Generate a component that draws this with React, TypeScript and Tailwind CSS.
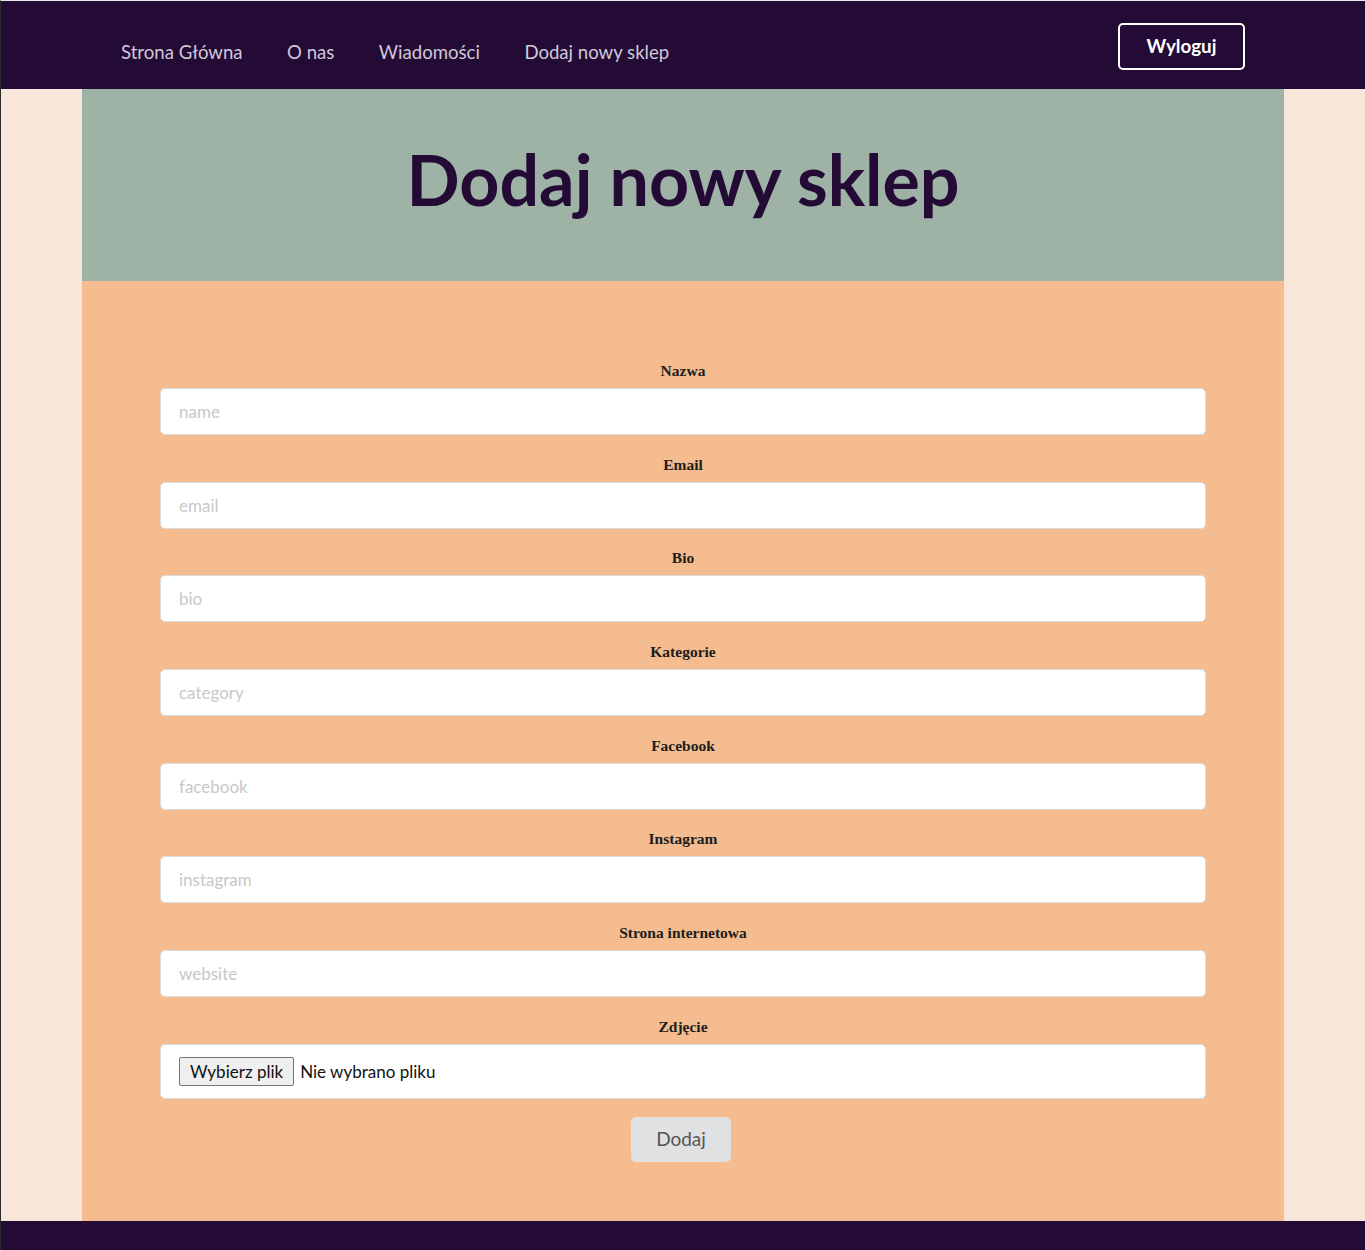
import React from "react";

const fields = [
  { label: "Nazwa", ph: "name" },
  { label: "Email", ph: "email" },
  { label: "Bio", ph: "bio" },
  { label: "Kategorie", ph: "category" },
  { label: "Facebook", ph: "facebook" },
  { label: "Instagram", ph: "instagram" },
  { label: "Strona internetowa", ph: "website" },
];

const lato = { fontFamily: "Lato, 'Liberation Sans', sans-serif" } as React.CSSProperties;
const serif = { fontFamily: "'Liberation Serif', 'DejaVu Serif', serif" } as React.CSSProperties;

export default function App() {
  return (
    <div
      className="min-h-[1250px] bg-[#f8e6db] border-t border-t-[#e6e6e6] border-l border-l-[#2a2a2a] flex flex-col"
      style={lato}
    >
      <nav className="bg-[#240b36] h-[88px] shrink-0">
        <div className="w-[1202px] mx-auto h-full flex items-center justify-between pl-[39px] pr-[39px]">
          <div className="flex items-center gap-[44.5px] mt-[15px] text-[18.6px] text-[#cfc8d8]">
            <a>Strona Główna</a>
            <a>O nas</a>
            <a>Wiadomości</a>
            <a>Dodaj nowy sklep</a>
          </div>
          <button className="mt-[3px] w-[127px] h-[47px] border-2 border-white rounded-[5px] text-white font-bold text-[18.8px]">
            Wyloguj
          </button>
        </div>
      </nav>
      <main className="w-[1202px] mx-auto flex flex-col">
        <header className="bg-[#9eb2a6] h-[192px] flex items-center justify-center">
          <h1 className="text-[70px] font-bold text-[#240b36] leading-none -mt-[12px]">Dodaj nowy sklep</h1>
        </header>
        <form className="bg-[#f4bc8f] px-[78px] pt-[80px] pb-[59px] flex flex-col">
          {fields.map((f, i) => (
            <div key={f.label} className={i === 0 ? "" : "mt-[19.7px]"}>
              <label
                className="block text-center text-[15.5px] leading-[20px] font-bold text-[#1d1d1d] mb-[7px]"
                style={serif}
              >
                {f.label}
              </label>
              <input
                placeholder={f.ph}
                className="w-full h-[47px] bg-white border border-[#dcdcdc] rounded-[5px] px-[18px] text-[17px] placeholder:text-[#c8c8c8] outline-none"
              />
            </div>
          ))}
          <div className="mt-[19.7px]">
            <label
              className="block text-center text-[15.5px] leading-[20px] font-bold text-[#1d1d1d] mb-[7px]"
              style={serif}
            >
              Zdjęcie
            </label>
            <div className="w-full h-[55px] bg-white border border-[#dcdcdc] rounded-[5px] px-[18px] flex items-center text-[17px] text-[#111]">
              <span className="h-[29px] px-[10px] flex items-center bg-[#efefef] border border-[#767676] rounded-[2px]">
                Wybierz plik
              </span>
              <span className="ml-[6px]">Nie wybrano pliku</span>
            </div>
          </div>
          <div className="flex justify-center mt-[18px]">
            <button type="button" className="mr-[4px] w-[100px] h-[45px] bg-[#e0e1e2] rounded-[5px] text-[19px] text-[#555]">
              Dodaj
            </button>
          </div>
        </form>
      </main>
      <footer className="bg-[#240b36] flex-1 min-h-[29px]" />
    </div>
  );
}
